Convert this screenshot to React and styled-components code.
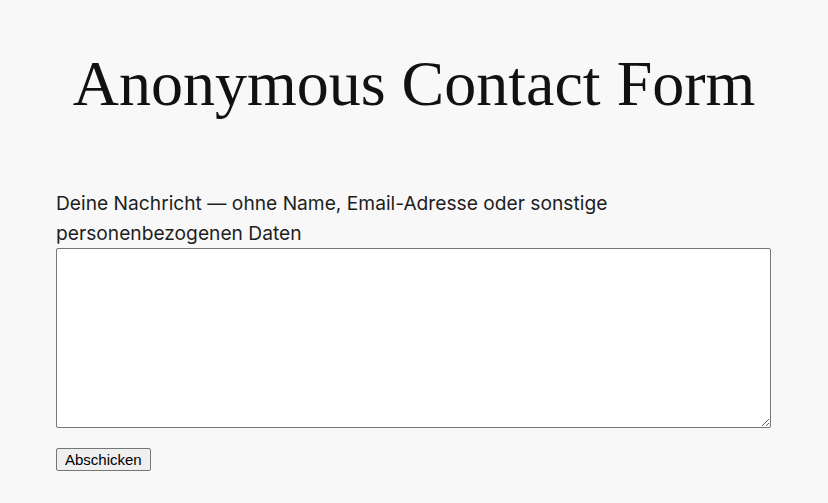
import React from 'react';
import styled, { createGlobalStyle } from 'styled-components';

const GlobalStyle = createGlobalStyle`
  html, body {
    margin: 0;
    padding: 0;
    background: #f8f8f8;
  }
`;

const Page = styled.main`
  width: 716px;
  margin: 0 auto;
  padding-top: 44px;
  color: #1c1c1c;
`;

const Title = styled.h1`
  margin: 0 0 64px;
  font-family: 'Liberation Serif', 'Times New Roman', serif;
  font-weight: 400;
  font-size: 64px;
  line-height: 80px;
  text-align: center;
  color: #111;
`;

const Form = styled.form`
  display: flex;
  flex-direction: column;
  align-items: flex-start;
`;

const Label = styled.label`
  font-family: Inter, 'Noto Sans', sans-serif;
  font-size: 19.2px;
  line-height: 30px;
  max-width: 600px;
  color: #1e1e1e;
`;

const MessageBox = styled.textarea`
  box-sizing: border-box;
  width: 715px;
  height: 180px;
  margin: 0 0 20px;
  border: 1px solid #767676;
  border-radius: 2px;
  background: #fff;
  resize: vertical;
`;

const SubmitButton = styled.button`
  font-family: Arial, 'Liberation Sans', sans-serif;
  font-size: 15px;
  padding: 2px 8px;
  color: #000;
  background: #efefef;
  border: 1px solid #767676;
  border-radius: 2px;
`;

export default function App() {
  return (
    <>
      <GlobalStyle />
      <Page>
        <Title>Anonymous Contact Form</Title>
        <Form onSubmit={(e) => e.preventDefault()}>
          <Label htmlFor="msg">
            Deine Nachricht — ohne Name, Email-Adresse oder sonstige personenbezogenen Daten
          </Label>
          <MessageBox id="msg" />
          <SubmitButton type="submit">Abschicken</SubmitButton>
        </Form>
      </Page>
    </>
  );
}
